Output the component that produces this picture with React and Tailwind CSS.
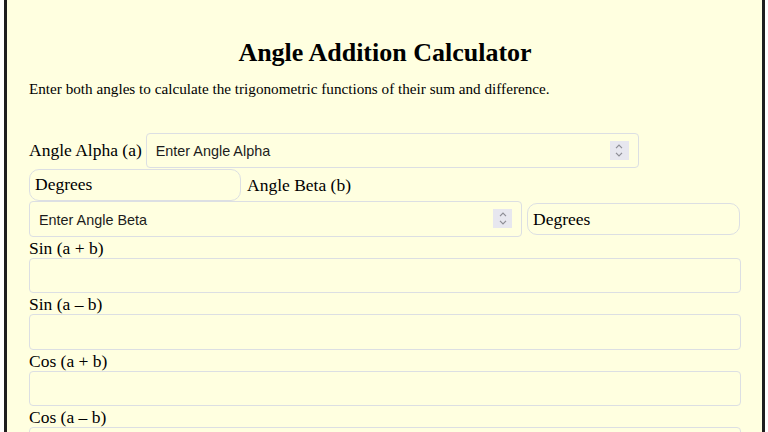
function Spinner() {
  return (
    <div className="mr-[9px] flex h-[19px] w-[19px] flex-col items-center justify-center gap-[3px] bg-[#e7e7ef]">
      <svg width="8" height="5" viewBox="0 0 8 5" fill="none">
        <path d="M1 4.2 L4 1.2 L7 4.2" stroke="#8d8d95" strokeWidth="1.2" />
      </svg>
      <svg width="8" height="5" viewBox="0 0 8 5" fill="none">
        <path d="M1 0.8 L4 3.8 L7 0.8" stroke="#8d8d95" strokeWidth="1.2" />
      </svg>
    </div>
  );
}

function NumberField({ placeholder, className }) {
  return (
    <div
      className={
        "flex h-[35.5px] items-center rounded-[4px] border border-[#dcdfe3] " +
        className
      }
    >
      <input
        type="text"
        placeholder={placeholder}
        className="h-full min-w-0 flex-1 bg-transparent pl-[9px] pt-[2px] font-['Liberation_Sans',Arial,sans-serif] text-[14.4px] text-black outline-none placeholder:text-[#1c1c1c]"
      />
      <Spinner />
    </div>
  );
}

function UnitSelect({ className }) {
  return (
    <select
      className={
        "appearance-none rounded-[10px] border border-[#dcdfe3] bg-transparent pl-[5px] font-['Liberation_Serif','Times_New_Roman',serif] text-[17.5px] text-black outline-none " +
        className
      }
      defaultValue="Degrees"
    >
      <option>Degrees</option>
      <option>Radians</option>
    </select>
  );
}

function Result({ label }) {
  return (
    <div className="flex flex-col">
      <label className="block h-[21px] pt-[1px] text-[17.5px] leading-[20px]">{label}</label>
      <input
        type="text"
        readOnly
        className="h-[35.5px] w-full rounded-[4px] border border-[#dcdfe3] bg-transparent outline-none"
      />
    </div>
  );
}

export default function App() {
  return (
    <div className="min-h-screen bg-white">
      <div className="ml-[4px] mr-[3px] min-h-screen border-x-[3px] border-[#1e1e1e] bg-[#ffffe0] pl-[22px] pr-[21px] pt-[38px] pb-[40px] font-['Liberation_Serif','Times_New_Roman',serif] text-black">
        <h2 className="text-center text-[26px] font-bold leading-[30px]">
          Angle Addition Calculator
        </h2>
        <p className="mt-[12px] text-[15.2px] leading-[17px]">
          Enter both angles to calculate the trigonometric functions of their sum and difference.
        </p>

        <div className="mt-[35.5px] flex h-[35.5px] items-center">
          <label className="mr-[4px] text-[17.5px] leading-[20px]">Angle Alpha (a)</label>
          <NumberField placeholder="Enter Angle Alpha" className="w-[493px]" />
        </div>

        <div className="flex h-[33px] items-center">
          <UnitSelect className="h-[32px] w-[212px]" />
          <label className="ml-[6px] text-[17.5px] leading-[20px]">Angle Beta (b)</label>
        </div>

        <div className="flex h-[35.5px] items-center">
          <NumberField placeholder="Enter Angle Beta" className="w-[493px]" />
          <UnitSelect className="ml-[5px] h-[32.5px] w-[213px]" />
        </div>

        <Result label="Sin (a + b)" />
        <Result label="Sin (a – b)" />
        <Result label="Cos (a + b)" />
        <Result label="Cos (a – b)" />
      </div>
    </div>
  );
}
